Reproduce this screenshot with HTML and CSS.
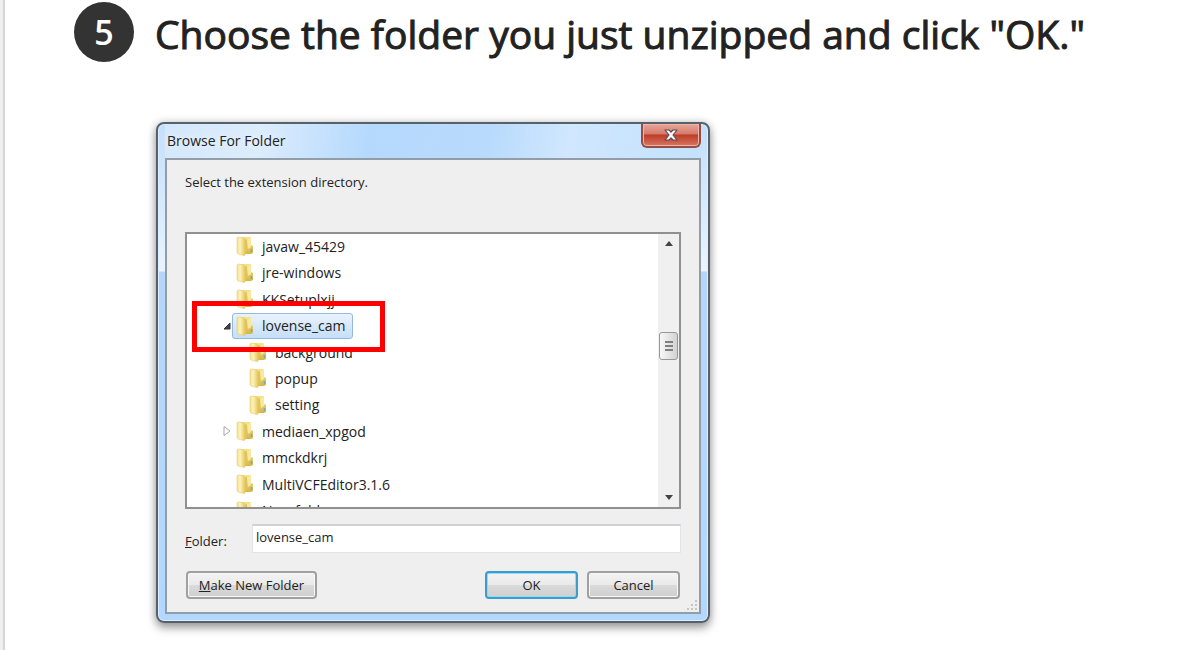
FILE: index.html
```html
<!DOCTYPE html>
<html lang="en">
<head>
<meta charset="utf-8">
<meta name="viewport" content="width=device-width, initial-scale=1">
<title>Choose the folder</title>
<link rel="stylesheet" href="styles.css">
</head>
<body>
<svg class="defs" aria-hidden="true">
  <defs>
    <linearGradient id="flap" x1="0" y1="0" x2="1" y2="0">
      <stop offset="0" stop-color="#f4e190"/><stop offset="0.4" stop-color="#fdf2b8"/><stop offset="1" stop-color="#e6c75c"/>
    </linearGradient>
    <linearGradient id="back" x1="0" y1="0" x2="0" y2="1">
      <stop offset="0" stop-color="#f4e48c"/><stop offset="1" stop-color="#d6b548"/>
    </linearGradient>
    <symbol id="folder" viewBox="0 0 18 20">
      <path d="M3 1H14Q15 1 15 2V9L17 10V17L15 18H5Z" fill="url(#back)"/>
      <path d="M11 3L15 2V11L12 13Z" fill="#f8e99f"/>
      <path d="M1 2Q1 1 3 1L8 2Q9 3 9 4V19Q8 20 6 19L2 18Q1 17 1 16Z" fill="url(#flap)" stroke="#e0c566" stroke-width=".5"/>
      <path d="M9 4L11 3V15L9 19Z" fill="#e0c35c"/>
      <path d="M15.500 13V16" stroke="#67b3ae" stroke-width="1.500"/>
    </symbol>
  </defs>
</svg>
<main class="page">
  <header class="step">
    <span class="step-number">5</span>
    <h1 class="step-title">Choose the folder you just unzipped and click "OK."</h1>
  </header>

  <section class="dialog" role="dialog" aria-labelledby="dialog-title">
    <div class="titlebar">
      <h2 class="dialog-title" id="dialog-title">Browse For Folder</h2>
      <button class="close" type="button" aria-label="Close">
        <svg width="16" height="14" viewBox="0 0 16 14"><path d="M2 2H6L8 4L10 2H14L10 7L14 12H10L8 10L6 12H2L6 7Z" fill="#fafafa" stroke="#5d4a55" stroke-width="1.2" stroke-linejoin="round"/></svg>
      </button>
    </div>
    <form class="panel">
      <p class="hint">Select the extension directory.</p>
      <div class="tree-area">
        <div class="tree-box">
          <ul class="tree" role="tree">
            <li class="row" role="treeitem"><svg class="folder"><use href="#folder"/></svg><span class="name">javaw_45429</span></li>
            <li class="row" role="treeitem"><svg class="folder"><use href="#folder"/></svg><span class="name">jre-windows</span></li>
            <li class="row" role="treeitem"><svg class="folder"><use href="#folder"/></svg><span class="name">KKSetuplxjj</span></li>
            <li class="row open" role="treeitem" aria-selected="true"><svg class="arrow" viewBox="0 0 10 10"><path d="M8 2V8H2Z" fill="#444" stroke="#333"/></svg><span class="selected"><svg class="folder"><use href="#folder"/></svg><span class="name">lovense_cam</span></span></li>
            <li class="row child" role="treeitem"><svg class="folder"><use href="#folder"/></svg><span class="name">background</span></li>
            <li class="row child" role="treeitem"><svg class="folder"><use href="#folder"/></svg><span class="name">popup</span></li>
            <li class="row child" role="treeitem"><svg class="folder"><use href="#folder"/></svg><span class="name">setting</span></li>
            <li class="row closed" role="treeitem"><svg class="arrow" viewBox="0 0 10 10"><path d="M2 0.5V9.5L8 5Z" fill="#fff" stroke="#a5a5a5"/></svg><svg class="folder"><use href="#folder"/></svg><span class="name">mediaen_xpgod</span></li>
            <li class="row" role="treeitem"><svg class="folder"><use href="#folder"/></svg><span class="name">mmckdkrj</span></li>
            <li class="row" role="treeitem"><svg class="folder"><use href="#folder"/></svg><span class="name">MultiVCFEditor3.1.6</span></li>
            <li class="row" role="treeitem"><svg class="folder"><use href="#folder"/></svg><span class="name">New folder</span></li>
          </ul>
          <div class="scrollbar">
            <svg class="scroll-arrow" viewBox="0 0 10 6"><path d="M5 0L9 5H1Z" fill="#444"/></svg>
            <div class="thumb"><i class="grip"></i><i class="grip"></i><i class="grip"></i></div>
            <svg class="scroll-arrow" viewBox="0 0 10 6"><path d="M5 6L9 1H1Z" fill="#444"/></svg>
          </div>
        </div>
        <div class="highlight"></div>
      </div>
      <div class="field">
        <label class="field-label" for="folder-name"><u>F</u>older:</label>
        <input class="field-input" id="folder-name" type="text" value="lovense_cam">
      </div>
      <div class="actions">
        <button class="btn btn-make" type="button"><u>M</u>ake New Folder</button>
        <button class="btn btn-ok" type="button">OK</button>
        <button class="btn" type="button">Cancel</button>
      </div>
      <svg class="resize" viewBox="0 0 12 12"><path d="M9 0h2v2h-2zM5 4h2v2h-2zM9 4h2v2h-2zM1 8h2v2h-2zM5 8h2v2h-2zM9 8h2v2h-2z" fill="#c6c6c6"/></svg>
    </form>
  </section>
</main>
</body>
</html>
```
FILE: styles.css
```css
* { box-sizing: border-box; }

body {
  margin: 0;
  background: #fff;
  color: #222;
  font-family: "Open Sans", "Noto Sans", sans-serif;
  overflow: hidden;
}

.defs { position: absolute; width: 0; height: 0; }

.page {
  min-height: 100vh;
  padding: 2px 20px 26px 69px;
  border-left: 2px solid #d6d6d6;
  margin-left: 3px;
  box-shadow: -3px 0 0 #efefef;
}

.step { display: flex; align-items: center; gap: 21px; }

.step-number {
  display: flex;
  align-items: center;
  justify-content: center;
  flex: none;
  width: 60px;
  height: 60px;
  border-radius: 50%;
  background: #333;
  color: #fff;
  font-size: 34px;
  font-weight: 600;
}

.step-title {
  margin: 0;
  padding-top: 4px;
  font-size: 39px;
  font-weight: 400;
  line-height: 56px;
  white-space: nowrap;
  -webkit-text-stroke: 1px #222;
}

.dialog {
  width: 554px;
  max-width: 100%;
  margin: 60px 0 0 82px;
  padding: 0 7px 7px;
  border: 2px solid #56616b;
  border-radius: 8px;
  background: linear-gradient(#c3dffb 0, #d9ebfd 90px, #eaf4fe 147px, #b5d6f8 148px, #b3d8ff 100%);
  box-shadow: 0 5px 10px rgba(0, 0, 0, .35), 0 0 9px rgba(0, 0, 0, .18), inset 0 0 0 1px #dceeff;
  color: #222;
  font-size: 13px;
}

.titlebar {
  display: flex;
  justify-content: space-between;
  align-items: flex-start;
  height: 34px;
  padding-left: 2px;
  background: linear-gradient(100deg, #d4e8fc 0, #dcecfd 18%, #b5d9fd 38%, #b8dafc 60%, #d0e7fe 75%, #c4e1fd 100%);
}

.dialog-title {
  margin: 0;
  font-size: 14px;
  font-weight: 400;
  line-height: 34px;
  text-shadow: 0 0 8px #fff;
}

.close {
  display: flex;
  align-items: center;
  justify-content: center;
  width: 60px;
  height: 24px;
  padding: 0;
  border: 2px solid #944c44;
  border-top: 0;
  border-radius: 0 0 6px 6px;
  background: linear-gradient(#e6a69a 0, #d57b6b 45%, #bd3c26 50%, #d67662 100%);
  box-shadow: inset 0 0 0 1px #efb4a8;
}

.panel {
  position: relative;
  padding: 12px 18px 13px;
  border: 2px solid #929da7;
  background: #efefef;
}

.hint { margin: 0 0 40px; line-height: 20px; }

.tree-area { position: relative; }

.tree-box {
  display: flex;
  height: 277px;
  border: 2px solid #909090;
  background: #fff;
  overflow: hidden;
}

.tree {
  display: grid;
  flex: 1;
  grid-auto-rows: 1fr;
  height: 291px;
  margin: -1px 0 0;
  padding: 0;
  list-style: none;
}

.row { display: flex; align-items: center; padding-left: 49px; font-size: 14px; }
.child { padding-left: 62px; }
.open, .closed { padding-left: 35px; }
.folder { flex: none; width: 18px; height: 20px; }
.name { padding-left: 8px; white-space: nowrap; }
.arrow { flex: none; width: 10px; height: 10px; }
.closed .arrow { margin-right: 4px; }

.selected {
  display: flex;
  align-items: center;
  height: 26px;
  padding: 0 6px 0 3px;
  border: 1px solid #93b9df;
  border-radius: 3px;
  background: linear-gradient(#eaf3fd, #c5def8);
}

.scrollbar {
  display: flex;
  flex-direction: column;
  align-items: center;
  justify-content: space-between;
  width: 21px;
  padding: 7px 0;
  background: #f0f0f0;
}

.scroll-arrow { width: 10px; height: 6px; }

.thumb {
  display: flex;
  flex-direction: column;
  align-items: center;
  justify-content: center;
  gap: 2px;
  width: 19px;
  height: 28px;
  margin-bottom: 50px;
  border: 1px solid #979797;
  border-radius: 3px;
  background: linear-gradient(90deg, #f8f8f8, #d2d2d2);
}

.grip { width: 8px; height: 2px; background: #808080; }

.highlight {
  position: absolute;
  top: 69px;
  left: 7px;
  width: 193px;
  height: 51px;
  border: 5px solid #f00;
}

.field { display: flex; align-items: center; margin-top: 15px; }

.field-label { width: 67px; line-height: 20px; padding-top: 4px; }

.field-input {
  flex: 1;
  min-width: 0;
  height: 29px;
  padding: 0 3px 4px;
  border: 1px solid #e1e5e8;
  border-top: 2px solid #cfd1d4;
  background: #fff;
  color: inherit;
  font: inherit;
}

.actions { display: flex; gap: 9px; margin-top: 18px; padding: 0 1px; }

.btn {
  width: 93px;
  height: 28px;
  padding: 0;
  border: 2px solid #a0a0a0;
  border-radius: 4px;
  background: linear-gradient(#f3f3f3 0, #eaeaea 48%, #dadada 50%, #cfcfcf 100%);
  box-shadow: inset 0 0 0 1px #f8f8f8;
  color: inherit;
  font: inherit;
}

.btn-make { width: 131px; margin-right: auto; }

.btn-ok { border-color: #3c9ccb; box-shadow: inset 0 0 0 1px #8edcf7; }

.resize { position: absolute; right: 1px; bottom: 0; width: 12px; height: 12px; }
```
